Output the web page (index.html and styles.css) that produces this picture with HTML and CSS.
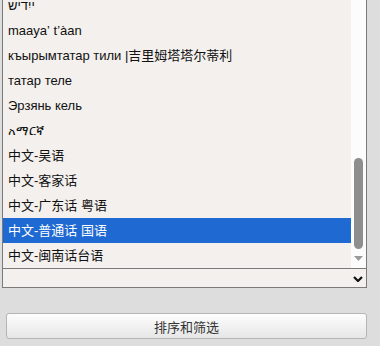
FILE: index.html
```html
<!DOCTYPE html>
<html lang="zh">
<head>
    <meta charset="UTF-8">
    <meta name="viewport" content="width=device-width, initial-scale=1.0">
    <title>语言</title>
    <link rel="stylesheet" href="styles.css">
</head>
<body>
    <div class="picker">
        <div class="listbox">
            <ul class="options">
                <li>ייִדיש</li>
                <li>maayaʼ tʼàan</li>
                <li>къырымтатар тили |吉里姆塔塔尔蒂利</li>
                <li>татар теле</li>
                <li>Эрзянь кель</li>
                <li>አማርኛ</li>
                <li>中文-吴语</li>
                <li>中文-客家话</li>
                <li>中文-广东话 粤语</li>
                <li class="selected">中文-普通话 国语</li>
                <li>中文-闽南话台语</li>
            </ul>
            <div class="scrollbar">
                <div class="thumb"></div>
                <svg class="arrow" width="9" height="5" viewBox="0 0 9 5">
                    <polygon points="0,0 9,0 4.5,5" fill="#9a9a9a"/>
                </svg>
            </div>
        </div>

        <div class="dropdown">
            <svg class="chevron" width="10" height="6" viewBox="0 0 10 6">
                <polyline points="1,1 5,5 9,1" fill="none" stroke="#111" stroke-width="2.2"/>
            </svg>
        </div>

        <button type="button" class="sort-button">排序和筛选</button>
    </div>
</body>
</html>
```

FILE: styles.css
```css
* {
    box-sizing: border-box;
    margin: 0;
    padding: 0;
}

body {
    background: #dddddd;
    font-family: "Liberation Sans", "Noto Sans CJK SC", sans-serif;
    font-size: 13px;
    color: #111;
}

.picker {
    width: 380px;
}

.listbox {
    display: flex;
    width: 365px;
    height: 269px;
    margin-left: 2px;
    border-left: 1px solid #7a7a7a;
    border-right: 1px solid #7a7a7a;
    border-bottom: 1px solid #7a7a7a;
    background: #f3f0ed;
    overflow: hidden;
}

.options {
    flex: 1;
    list-style: none;
    margin-top: -7px;
}

.options li {
    height: 25px;
    line-height: 25px;
    padding-left: 5px;
    white-space: nowrap;
}

.options li.selected {
    background: #1e69d2;
    color: #fff;
}

.scrollbar {
    display: flex;
    flex-direction: column;
    width: 15px;
    padding: 158px 3px 0;
    background: #fcfcfc;
}

.thumb {
    height: 91px;
    background: #8e8e8e;
    border-radius: 5px;
}

.arrow {
    display: block;
    margin-top: 7px;
}

.dropdown {
    display: flex;
    align-items: center;
    justify-content: flex-end;
    width: 365px;
    height: 19px;
    margin-left: 2px;
    padding-right: 3px;
    border-left: 1px solid #7a7a7a;
    border-right: 1px solid #7a7a7a;
    border-bottom: 1px solid #7a7a7a;
    background: #f3f0ed;
}

.chevron {
    display: block;
    margin-top: 1px;
}

.sort-button {
    display: block;
    width: 361px;
    height: 26px;
    margin: 25px 0 0 6px;
    border: 1px solid #b5b5b5;
    border-radius: 3px;
    background: linear-gradient(#fdfdfd, #e6e6e6);
    font-family: "Liberation Sans", "Noto Sans CJK SC", sans-serif;
    font-size: 13px;
    color: #333;
}
```
